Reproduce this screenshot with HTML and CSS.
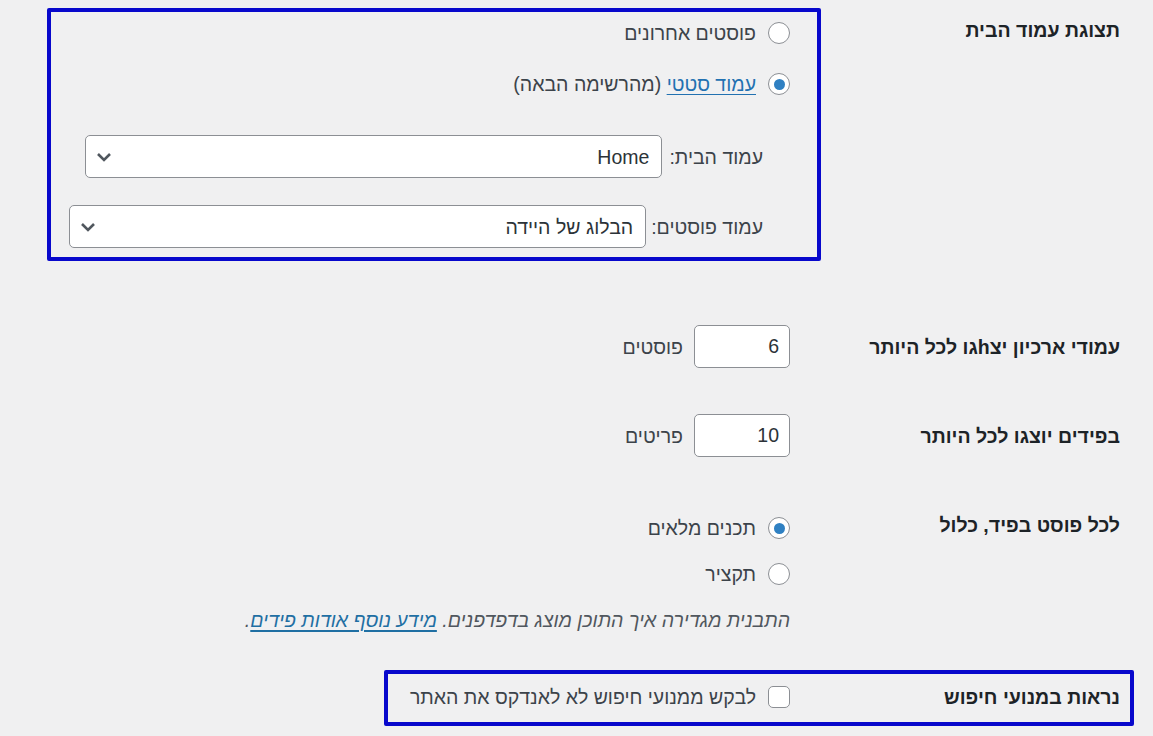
FILE: index.html
```html
<!doctype html>
<html lang="he" dir="rtl">
<head>
    <meta charset="utf-8" />
    <title>הגדרות קריאה</title>
    <link rel="stylesheet" href="styles.css">
</head>
<body>
<main class="settings">
    <div class="row row--front">
        <div class="row__label">תצוגת עמוד הבית</div>
        <div class="row__field">
            <label class="choice"><input type="radio" name="show_on_front"><span>פוסטים אחרונים</span></label>
            <label class="choice choice--second"><input type="radio" name="show_on_front" checked><span><a href="#">עמוד סטטי</a> (מהרשימה הבאה)</span></label>
            <ul class="pages">
                <li>
                    <label for="page_on_front">עמוד הבית:</label>
                    <span class="select">
                        <select id="page_on_front"><option>Home</option></select>
                        <svg class="select__arrow" width="16" height="10" viewBox="0 0 16 10"><path d="M2 2l6 6 6-6" fill="none" stroke="#50575e" stroke-width="2.6"/></svg>
                    </span>
                </li>
                <li>
                    <label for="page_for_posts">עמוד פוסטים:</label>
                    <span class="select">
                        <select id="page_for_posts"><option>הבלוג של היידה</option></select>
                        <svg class="select__arrow" width="16" height="10" viewBox="0 0 16 10"><path d="M2 2l6 6 6-6" fill="none" stroke="#50575e" stroke-width="2.6"/></svg>
                    </span>
                </li>
            </ul>
        </div>
        <div class="mark mark--front"></div>
    </div>

    <div class="row row--inline row--archive">
        <div class="row__label">עמודי ארכיון יצhגו לכל היותר</div>
        <div class="row__field">
            <input class="small-text" type="text" value="6"> <span>פוסטים</span>
        </div>
    </div>

    <div class="row row--inline row--feed">
        <div class="row__label">בפידים יוצגו לכל היותר</div>
        <div class="row__field">
            <input class="small-text" type="text" value="10"> <span>פריטים</span>
        </div>
    </div>

    <div class="row row--excerpt">
        <div class="row__label">לכל פוסט בפיד, כלול</div>
        <div class="row__field">
            <label class="choice"><input type="radio" name="rss_use_excerpt" checked><span>תכנים מלאים</span></label>
            <label class="choice choice--tight"><input type="radio" name="rss_use_excerpt"><span>תקציר</span></label>
            <p class="description">התבנית מגדירה איך התוכן מוצג בדפדפנים. <a href="#">מידע נוסף אודות פידים</a>.</p>
        </div>
    </div>

    <div class="row row--inline row--search">
        <div class="row__label">נראות במנועי חיפוש</div>
        <div class="row__field">
            <label class="choice"><input type="checkbox"><span>לבקש ממנועי חיפוש לא לאנדקס את האתר</span></label>
        </div>
        <div class="mark mark--search"></div>
    </div>
    <div class="row">
        <div></div>
        <p class="description description--cut">זה תלוי במנועי החיפוש אם הם יכבדו את הבקשה הזאת או לא.</p>
    </div>
</main>
</body>
</html>
```

FILE: styles.css
```css
html, body {
    margin: 0;
    height: 100%;
    overflow: hidden;
}
body {
    background-color: #f0f0f1;
    color: #3c434a;
    font-family: "Liberation Sans", Arial, "DejaVu Sans", sans-serif;
    font-size: 19.5px;
    line-height: 28px;
}
.settings {
    padding-right: 33px;
}
.row {
    position: relative;
    display: grid;
    grid-template-columns: 330px 1fr;
    align-items: start;
}
.row--inline {
    align-items: center;
}
.row__label {
    color: #1d2327;
    font-weight: bold;
}
.row--front .row__label {
    padding-top: 16px;
}
.row--front .row__field {
    padding-top: 19px;
}
.row--archive {
    margin-top: 77px;
}
.row--feed {
    margin-top: 46px;
}
.row--excerpt {
    margin-top: 54px;
}
.row--excerpt .row__field {
    padding-top: 3px;
}
.row--search {
    margin-top: 49px;
}
.row__field {
    display: flex;
    flex-direction: column;
    align-items: flex-start;
}
.row--inline .row__field {
    flex-direction: row;
    align-items: center;
    gap: 11px;
}

/* radio / checkbox lines */
.choice {
    display: flex;
    align-items: center;
    gap: 12px;
    height: 28px;
}
.choice--second {
    margin-top: 23px;
}
.choice--tight {
    margin-top: 18px;
}
.choice input {
    appearance: none;
    margin: 0;
    width: 22px;
    height: 22px;
    border: 1.5px solid #8c8f94;
    background-color: #fff;
    border-radius: 50%;
    box-sizing: border-box;
    display: grid;
    place-items: center;
    flex: none;
}
.choice input[type="checkbox"] {
    border-radius: 5px;
}
.choice input:checked::before {
    content: "";
    width: 11px;
    height: 11px;
    border-radius: 50%;
    background-color: #2f80c2;
}
a {
    color: #2271b1;
    text-decoration: underline;
    text-underline-offset: 3px;
}

/* page selects */
.pages {
    list-style: none;
    margin: 37px 0 0;
    padding: 0 27px 0 0;
}
.pages li {
    display: flex;
    align-items: center;
}
.pages li label {
    margin-left: 7px;
}
.pages li + li label {
    margin-left: 5px;
}
.pages li + li {
    margin-top: 27px;
}
.select {
    position: relative;
    display: block;
}
.select select {
    appearance: none;
    width: 577px;
    height: 43px;
    margin: 0;
    padding: 0 12px 0 40px;
    border: 1px solid #8c8f94;
    border-radius: 5px;
    background-color: #fff;
    color: #2c3338;
    font: inherit;
    font-size: 19.5px;
}
.select__arrow {
    position: absolute;
    left: 11px;
    top: 17px;
    pointer-events: none;
}

.small-text {
    width: 96px;
    height: 43px;
    box-sizing: border-box;
    margin: 0;
    padding: 0 10px;
    border: 1px solid #8c8f94;
    border-radius: 5px;
    background-color: #fff;
    color: #2c3338;
    font: inherit;
    font-size: 19.5px;
    text-align: right;
}

.description {
    margin: 18px 0 0;
    color: #50575e;
    font-style: italic;
    font-size: 19.5px;
}
.description a {
    color: #1f6fa3;
    text-decoration-thickness: 2px;
}
.description--cut {
    margin-top: 24px;
}

/* annotation boxes drawn over the screenshot */
.mark {
    position: absolute;
    border: 4px solid #0808cc;
    border-radius: 2px;
    box-sizing: border-box;
    pointer-events: none;
}
.mark--front {
    top: 8px;
    right: 299px;
    width: 774px;
    height: 253px;
}
.mark--search {
    top: -13px;
    right: -14px;
    width: 750px;
    height: 56px;
}
```
